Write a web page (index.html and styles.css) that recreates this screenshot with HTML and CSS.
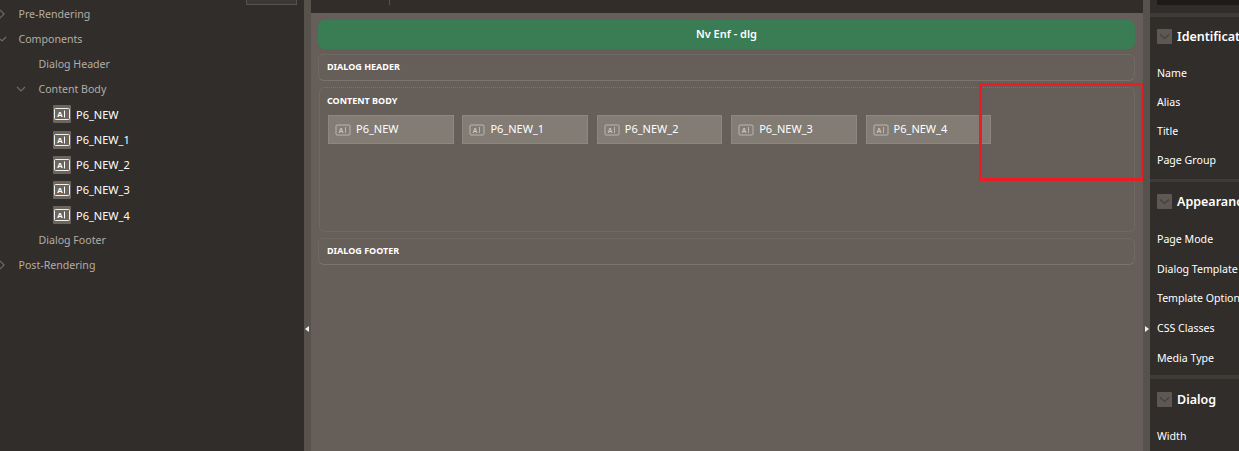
FILE: index.html
```html
<!DOCTYPE html>
<html lang="en">
<head>
<meta charset="utf-8">
<title>Page Designer</title>
<link rel="stylesheet" href="styles.css">
</head>
<body>
<div class="app">
  <aside class="tree">
    <div class="tree-tab"></div>
    <div class="row lvl0"><svg class="tw" viewBox="0 0 10 10"><path d="M3 1l4 4-4 4"/></svg><span>Pre-Rendering</span></div>
    <div class="row lvl0"><svg class="tw" viewBox="0 0 10 10"><path d="M1 3l4 4 4-4"/></svg><span>Components</span></div>
    <div class="row lvl1"><span>Dialog Header</span></div>
    <div class="row lvl1"><svg class="tw" viewBox="0 0 10 10"><path d="M1 3l4 4 4-4"/></svg><span>Content Body</span></div>
    <div class="row lvl2"><svg class="ico" viewBox="0 0 18 18"><rect class="ico-bg" width="18" height="18" rx="1"/><rect class="ico-box" x="1.5" y="3.5" width="15" height="11" rx="1"/><text class="ico-t" x="4" y="12">A</text><path class="ico-bar" d="M11.5 5.5v7"/></svg><span>P6_NEW</span></div>
    <div class="row lvl2"><svg class="ico" viewBox="0 0 18 18"><rect class="ico-bg" width="18" height="18" rx="1"/><rect class="ico-box" x="1.5" y="3.5" width="15" height="11" rx="1"/><text class="ico-t" x="4" y="12">A</text><path class="ico-bar" d="M11.5 5.5v7"/></svg><span>P6_NEW_1</span></div>
    <div class="row lvl2"><svg class="ico" viewBox="0 0 18 18"><rect class="ico-bg" width="18" height="18" rx="1"/><rect class="ico-box" x="1.5" y="3.5" width="15" height="11" rx="1"/><text class="ico-t" x="4" y="12">A</text><path class="ico-bar" d="M11.5 5.5v7"/></svg><span>P6_NEW_2</span></div>
    <div class="row lvl2"><svg class="ico" viewBox="0 0 18 18"><rect class="ico-bg" width="18" height="18" rx="1"/><rect class="ico-box" x="1.5" y="3.5" width="15" height="11" rx="1"/><text class="ico-t" x="4" y="12">A</text><path class="ico-bar" d="M11.5 5.5v7"/></svg><span>P6_NEW_3</span></div>
    <div class="row lvl2"><svg class="ico" viewBox="0 0 18 18"><rect class="ico-bg" width="18" height="18" rx="1"/><rect class="ico-box" x="1.5" y="3.5" width="15" height="11" rx="1"/><text class="ico-t" x="4" y="12">A</text><path class="ico-bar" d="M11.5 5.5v7"/></svg><span>P6_NEW_4</span></div>
    <div class="row lvl1"><span>Dialog Footer</span></div>
    <div class="row lvl0"><svg class="tw" viewBox="0 0 10 10"><path d="M3 1l4 4-4 4"/></svg><span>Post-Rendering</span></div>
  </aside>
  <div class="split"><span class="arrow left"></span></div>
  <main class="center">
    <div class="topbar"><i></i></div>
    <div class="canvas">
      <div class="title">Nv Enf - dlg</div>
      <section class="zone z-head"><h4>DIALOG HEADER</h4></section>
      <section class="zone z-body">
        <h4>CONTENT BODY</h4>
        <div class="items">
          <div class="item"><svg class="ico2" viewBox="0 0 16 12"><rect x="1" y="1" width="14" height="10" rx="1"/><text x="3.5" y="9">A</text><path d="M10.5 3v6"/></svg><span>P6_NEW</span></div>
          <div class="item"><svg class="ico2" viewBox="0 0 16 12"><rect x="1" y="1" width="14" height="10" rx="1"/><text x="3.5" y="9">A</text><path d="M10.5 3v6"/></svg><span>P6_NEW_1</span></div>
          <div class="item"><svg class="ico2" viewBox="0 0 16 12"><rect x="1" y="1" width="14" height="10" rx="1"/><text x="3.5" y="9">A</text><path d="M10.5 3v6"/></svg><span>P6_NEW_2</span></div>
          <div class="item"><svg class="ico2" viewBox="0 0 16 12"><rect x="1" y="1" width="14" height="10" rx="1"/><text x="3.5" y="9">A</text><path d="M10.5 3v6"/></svg><span>P6_NEW_3</span></div>
          <div class="item"><svg class="ico2" viewBox="0 0 16 12"><rect x="1" y="1" width="14" height="10" rx="1"/><text x="3.5" y="9">A</text><path d="M10.5 3v6"/></svg><span>P6_NEW_4</span></div>
        </div>
      </section>
      <section class="zone z-foot"><h4>DIALOG FOOTER</h4></section>
    </div>
    <div class="redbox"></div>
  </main>
  <div class="split"><span class="arrow right"></span></div>
  <aside class="props">
    <div class="props-top"><i></i></div>
    <section class="group g1">
      <h3><b class="chev"><svg viewBox="0 0 15 15"><path d="M3 5.5l4.5 4 4.5-4"/></svg></b>Identification</h3>
      <div class="prop">Name</div><div class="prop">Alias</div><div class="prop">Title</div><div class="prop">Page Group</div>
    </section>
    <section class="group g2">
      <h3><b class="chev"><svg viewBox="0 0 15 15"><path d="M3 5.5l4.5 4 4.5-4"/></svg></b>Appearance</h3>
      <div class="prop">Page Mode</div><div class="prop">Dialog Template</div><div class="prop">Template Options</div><div class="prop">CSS Classes</div><div class="prop">Media Type</div>
    </section>
    <section class="group g3">
      <h3><b class="chev"><svg viewBox="0 0 15 15"><path d="M3 5.5l4.5 4 4.5-4"/></svg></b>Dialog</h3>
      <div class="prop">Width</div>
    </section>
  </aside>
</div>
</body>
</html>
```
FILE: styles.css
```css
* { box-sizing: border-box; }
html, body { margin: 0; height: 100%; overflow: hidden; }
body { font-family: "Noto Sans", "Open Sans", sans-serif; background: #312d2a; color: #fff; }
.app { display: flex; width: 1239px; height: 451px; overflow: hidden; }

.tree { width: 304px; flex: none; background: #312d2a; padding-top: 1px; position: relative; }
.tree-tab { position: absolute; left: 246px; top: -1px; width: 51px; height: 6px; border: 1px solid #57524d; background: #3c3835; }
.row { height: 25.2px; display: flex; align-items: center; font-size: 10.6px; color: #b3ada7; position: relative; }
.row span { white-space: nowrap; }
.lvl0 { padding-left: 18.5px; }
.lvl1 { padding-left: 38.5px; }
.lvl2 { padding-left: 53px; color: #fff; font-size: 11px; }
.lvl2 span { margin-left: 5px; }
.tw { position: absolute; width: 10px; height: 10px; fill: none; stroke: #6f6a64; stroke-width: 1.2; }
.lvl0 .tw { left: -3px; }
.lvl1 .tw { left: 16px; }
.ico { width: 18px; height: 18px; flex: none; }
.ico-bg { fill: #6b6560; }
.ico-box { fill: none; stroke: #f2efe9; stroke-width: 1; }
.ico-t { font: bold 8px "Liberation Sans", sans-serif; fill: #fff; }
.ico-bar { stroke: #fff; stroke-width: 1; fill: none; }

.split { width: 7px; flex: none; background: #57524c; position: relative; }
.arrow { position: absolute; top: 326px; width: 0; height: 0; border-top: 3px solid transparent; border-bottom: 3px solid transparent; }
.arrow.left { left: 1px; border-right: 4px solid #f0eeea; }
.arrow.right { left: 2px; border-left: 4px solid #f0eeea; }

.center { width: 832px; flex: none; display: flex; flex-direction: column; position: relative; background: #665e58; }
.topbar { height: 13px; flex: none; background: #312d2a; }
.topbar i { display: block; width: 1px; height: 5px; margin-left: 78px; background: #57524d; }
.canvas { flex: 1; padding: 7px 8px 0 7px; }
.title { height: 29px; padding-bottom: 2px; background: #3a7d54; border-radius: 7px; display: flex; align-items: center; justify-content: center; font-size: 11px; font-weight: 600; margin-bottom: 5px; }
.zone { border: 1px dotted #7b746d; border-radius: 6px; margin-bottom: 6px; }
.zone h4 { margin: 0; font-size: 9px; font-weight: 700; line-height: 13px; white-space: nowrap; }
.z-head { height: 27px; padding: 5px 8px; border-bottom-style: solid; }
.z-body { height: 145px; padding: 6px 7px; margin-left: 1px; }
.z-foot { height: 27px; padding: 5px 8px; border-bottom-style: solid; }
.items { display: flex; gap: 8.8px; margin-top: 8px; padding-left: 1px; }
.item { width: 125.6px; height: 29px; flex: none; background: #827c75; border: 1px solid #8d8780; display: flex; align-items: center; padding-left: 6px; font-size: 11px; }
.item span { margin-left: 5px; padding-bottom: 3px; }
.ico2 { width: 16px; height: 12px; flex: none; fill: none; stroke: #b9b5af; stroke-width: 1; }
.ico2 text { font: bold 7px "Liberation Sans", sans-serif; fill: #c9c5bf; stroke: none; }
.redbox { position: absolute; left: 668px; top: 83px; width: 165px; height: 98px; border: 3px solid #ed1c24; }

.props { flex: 1; min-width: 0; background: #312d2a; overflow: hidden; }
.props-top { height: 17px; padding-left: 7px; border-bottom: 4px solid #3f3b37; }
.props-top i { display: block; height: 5px; background: #1e1b19; }
.group h3 { margin: 0 0 8.5px; height: 28px; display: flex; align-items: center; padding-left: 7px; font-size: 12.5px; font-weight: 600; white-space: nowrap; }
.chev { width: 15px; height: 15px; margin-right: 5px; background: #5d5853; border-radius: 1px; flex: none; }
.chev svg { display: block; width: 15px; height: 15px; fill: none; stroke: #45403c; stroke-width: 1.3; }
.prop { height: 29px; display: flex; align-items: center; padding-left: 7px; font-size: 10.6px; white-space: nowrap; }
.g1 { padding-top: 5px; padding-bottom: 4px; border-bottom: 3px solid #3f3b37; }
.g2 { padding-top: 6px; padding-bottom: 3px; border-bottom: 4px solid #3f3b37; }
.g2 .prop { height: 29.7px; }
.g3 { padding-top: 6px; }
```
